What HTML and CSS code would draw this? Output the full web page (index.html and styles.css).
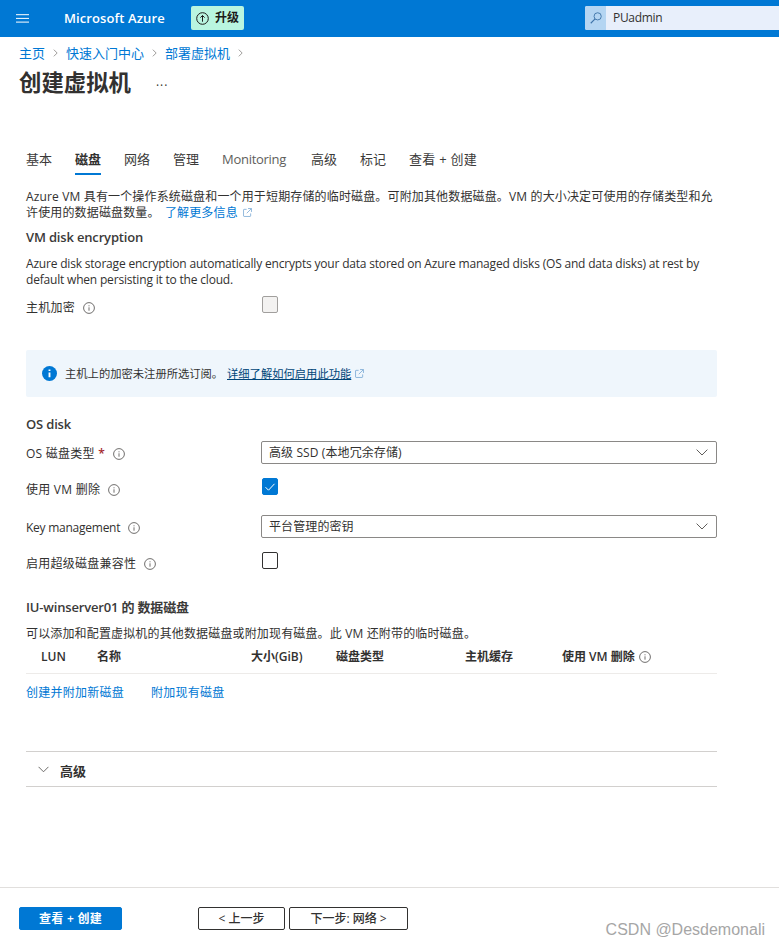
FILE: index.html
```html
<!DOCTYPE html>
<html lang="zh-CN">
<head>
<meta charset="utf-8">
<title>创建虚拟机</title>
<link rel="stylesheet" href="styles.css">
</head>
<body>
<svg class="defs" width="0" height="0" aria-hidden="true">
  <symbol id="i-info" viewBox="0 0 12 12"><circle cx="6" cy="6" r="5.4" fill="none" stroke="currentColor" stroke-width=".9"/><path d="M6 5.3v3.4M6 3.3v1" fill="none" stroke="currentColor" stroke-width=".9"/></symbol>
  <symbol id="i-ext" viewBox="0 0 10 10"><path d="M4 1.5H1.2a.6.6 0 0 0-.6.6v6.7c0 .3.3.6.6.6h6.7c.3 0 .6-.3.6-.6V6M5.6.6h3.8v3.8M9.2.8 4.2 5.8" fill="none" stroke="currentColor" stroke-width=".8"/></symbol>
  <symbol id="i-chev" viewBox="0 0 12 7"><path d="M.6.6 6 6 11.4.6" fill="none" stroke="currentColor" stroke-width="1"/></symbol>
</svg>

<header class="topbar">
  <svg class="burger" width="13" height="9" viewBox="0 0 13 9"><path d="M0 .7h13M0 4.4h13M0 8.1h13" stroke="#fff" stroke-width="1"/></svg>
  <span class="brand">Microsoft Azure</span>
  <span class="upgrade">
    <svg width="13" height="13" viewBox="0 0 13 13"><circle cx="6.5" cy="6.5" r="5.8" fill="none" stroke="#1b1a19" stroke-width="1"/><path d="M6.5 9.7V3.6M4.4 5.6l2.1-2.1 2.1 2.1" fill="none" stroke="#1b1a19" stroke-width="1"/></svg>
    升级
  </span>
  <div class="search">
    <span class="search-btn"><svg width="12" height="12" viewBox="0 0 13 13"><circle cx="8.3" cy="4.7" r="3.9" fill="none" stroke="#3f74a8" stroke-width="1"/><path d="M5.5 7.5 .8 12.2" stroke="#3f74a8" stroke-width="1.2"/></svg></span>
    <span class="search-text">PUadmin</span>
  </div>
</header>

<nav class="crumbs">
  <a>主页</a><svg class="crumb-sep" width="5" height="10" viewBox="0 0 6 10"><path d="M1 1l4 4-4 4" fill="none" stroke="#8a8886" stroke-width="1"/></svg>
  <a>快速入门中心</a><svg class="crumb-sep" width="5" height="10" viewBox="0 0 6 10"><path d="M1 1l4 4-4 4" fill="none" stroke="#8a8886" stroke-width="1"/></svg>
  <a>部署虚拟机</a><svg class="crumb-sep" width="5" height="10" viewBox="0 0 6 10"><path d="M1 1l4 4-4 4" fill="none" stroke="#8a8886" stroke-width="1"/></svg>
</nav>

<div class="title-row">
  <h1>创建虚拟机</h1>
  <span class="more">···</span>
</div>

<main class="content">
  <div class="tabs">
    <span class="tab">基本</span>
    <span class="tab active">磁盘</span>
    <span class="tab">网络</span>
    <span class="tab">管理</span>
    <span class="tab tab-en">Monitoring</span>
    <span class="tab">高级</span>
    <span class="tab">标记</span>
    <span class="tab tab-last">查看 + 创建</span>
  </div>

  <p class="text zh intro">Azure VM 具有一个操作系统磁盘和一个用于短期存储的临时磁盘。可附加其他数据磁盘。VM 的大小决定可使用的存储类型和允<br>许使用的数据磁盘数量。 <a class="link intro-link">了解更多信息<svg class="ext" width="9" height="9"><use href="#i-ext"/></svg></a></p>

  <h2 class="h-enc">VM disk encryption</h2>
  <p class="text desc">Azure disk storage encryption automatically encrypts your data stored on Azure managed disks (OS and data disks) at rest by<br>default when persisting it to the cloud.</p>

  <div class="row row-check row-host">
    <label class="lbl">主机加密<svg class="info" width="12" height="12"><use href="#i-info"/></svg></label>
    <span class="check disabled"></span>
  </div>

  <div class="notice">
    <svg width="15" height="15" viewBox="0 0 16 16"><circle cx="8" cy="8" r="8" fill="#0078d4"/><path d="M8 7v5M8 3.6v1.8" stroke="#fff" stroke-width="2"/></svg>
    <span class="notice-text">主机上的加密未注册所选订阅。</span>
    <a class="notice-link">详细了解如何启用此功能</a>
    <svg class="ext notice-ext" width="9" height="9"><use href="#i-ext"/></svg>
  </div>

  <h2 class="h-os">OS disk</h2>

  <div class="row row-type">
    <label class="lbl">OS 磁盘类型<span class="req"> *</span><svg class="info" width="12" height="12"><use href="#i-info"/></svg></label>
    <div class="select"><span>高级 SSD (本地冗余存储)</span><svg class="chev" width="12" height="7"><use href="#i-chev"/></svg></div>
  </div>
  <div class="row row-check row-del">
    <label class="lbl">使用 VM 删除<svg class="info" width="12" height="12"><use href="#i-info"/></svg></label>
    <span class="check on"><svg width="12" height="10" viewBox="0 0 12 10"><path d="M1.5 5.2 4.5 8.2 10.5 1.8" fill="none" stroke="#fff" stroke-width="1"/></svg></span>
  </div>
  <div class="row row-key">
    <label class="lbl lbl-en">Key management<svg class="info" width="12" height="12"><use href="#i-info"/></svg></label>
    <div class="select"><span>平台管理的密钥</span><svg class="chev" width="12" height="7"><use href="#i-chev"/></svg></div>
  </div>
  <div class="row row-check row-ultra">
    <label class="lbl">启用超级磁盘兼容性<svg class="info" width="12" height="12"><use href="#i-info"/></svg></label>
    <span class="check"></span>
  </div>

  <h2 class="h-data">IU-winserver01 的 数据磁盘</h2>
  <p class="text zh data-desc">可以添加和配置虚拟机的其他数据磁盘或附加现有磁盘。此 VM 还附带的临时磁盘。</p>

  <div class="thead">
    <span>LUN</span><span>名称</span><span>大小(GiB)</span><span>磁盘类型</span><span>主机缓存</span>
    <span class="th-last">使用 VM 删除<svg class="info" width="12" height="12"><use href="#i-info"/></svg></span>
  </div>
  <div class="actions">
    <a class="link">创建并附加新磁盘</a>
    <a class="link">附加现有磁盘</a>
  </div>

  <div class="accordion">
    <svg class="chev" width="11" height="7"><use href="#i-chev"/></svg>
    <span>高级</span>
  </div>
</main>

<footer class="footer">
  <button class="btn primary">查看 + 创建</button>
  <button class="btn prev">&lt; 上一步</button>
  <button class="btn next">下一步: 网络 &gt;</button>
</footer>
<span class="watermark">CSDN @Desdemonali</span>
</body>
</html>
```

FILE: styles.css
```css
* { box-sizing: border-box; }
html, body { margin: 0; padding: 0; height: 100%; }
body {
  position: relative;
  height: 945px;
  overflow: hidden;
  display: flex;
  flex-direction: column;
  background: #fff;
  color: #323130;
  font-family: "Open Sans", "Noto Sans CJK SC", sans-serif;
  font-size: 12px;
  line-height: 16px;
}
.defs { position: absolute; }

.topbar {
  flex: none;
  height: 37px;
  background: #0078d4;
  display: flex;
  align-items: center;
  color: #fff;
  padding: 0 0 1px 16px;
}
.burger { flex: none; }
.brand { margin-left: 35px; font-size: 13px; font-weight: 600; letter-spacing: .1px; width: 127px; white-space: nowrap; }
.upgrade {
  width: 53px;
  height: 24px;
  background: #b9f5e0;
  border-radius: 2px;
  color: #1b1a19;
  font-weight: 700;
  display: flex;
  align-items: center;
  gap: 6px;
  padding-left: 5px;
  white-space: nowrap;
}
.search {
  margin-left: 341px;
  flex: 1;
  height: 24px;
  background: #e8effb;
  border-radius: 2px 0 0 2px;
  display: flex;
  align-items: center;
}
.search-btn {
  width: 21px;
  height: 24px;
  background: #b4d5f2;
  border-radius: 2px 0 0 2px;
  display: flex;
  align-items: center;
  justify-content: center;
}
.search-text { margin-left: 7px; color: #323130; font-size: 12px; letter-spacing: -.3px; }

.crumbs {
  display: flex;
  align-items: center;
  height: 16px;
  margin: 8px 0 0 19px;
  font-size: 13px;
}
.crumbs a { color: #0078d4; }
.crumb-sep { margin: 0 8px; flex: none; }

.title-row { display: flex; align-items: center; margin: 4px 0 0 19px; height: 36px; }
h1 { margin: 0; font-size: 22.4px; font-weight: 700; line-height: 36px; color: #323130; }
.more { margin: 6px 0 0 25px; font-size: 12px; letter-spacing: 1px; color: #323130; }

.content { width: 717px; padding-left: 26px; flex: none; }

.tabs { display: flex; gap: 23px; margin-top: 48px; height: 29px; font-size: 13px; line-height: 20px; color: #3b3a39; }
.tab { height: 29px; }
.tab-en { width: 66px; letter-spacing: -.3px; color: #605e5c; white-space: nowrap; }
.tab-last { letter-spacing: .25px; }
.tab.active { font-weight: 600; color: #323130; border-bottom: 2px solid #0078d4; height: 26px; }

.text { margin: 0; color: #323130; white-space: nowrap; }
.zh { letter-spacing: .15px; }
.intro { margin-top: 11px; }
.link { color: #0078d4; letter-spacing: .25px; white-space: nowrap; }
.intro-link { margin-left: 2px; letter-spacing: .15px; }
.ext { margin-left: 5px; color: #6a9fd0; }

h2 { margin: 0; font-size: 13px; font-weight: 600; letter-spacing: -.17px; line-height: 18px; color: #3b3a39; }
.h-enc { margin-top: 7px; }
.desc { margin-top: 10px; letter-spacing: -.19px; }

.row { display: grid; grid-template-columns: 235px 456px; align-items: center; }
.lbl { display: flex; align-items: center; color: #323130; letter-spacing: .25px; white-space: nowrap; padding-top: 2px; }
.lbl-en { letter-spacing: -.25px; }
.row-check { align-items: start; height: 17px; }
.row-check .lbl { padding-top: 0; margin-top: 4px; }
.info { margin-left: 8px; color: #605e5c; flex: none; }
.req { color: #a4262c; white-space: pre; font-weight: 600; }

.check {
  width: 16px;
  height: 17px;
  border: 1px solid #323130;
  border-radius: 2px;
  display: flex;
  align-items: center;
  justify-content: center;
  margin-left: 1px;
}
.check.disabled { background: #f3f2f1; border-color: #a19f9d; }
.check.on { background: #0078d4; border-color: #0078d4; }

.row-host { margin-top: 8px; }
.notice {
  margin-top: 37px;
  width: 691px;
  height: 47px;
  background: #eff6fc;
  border-radius: 2px;
  display: flex;
  align-items: center;
  padding-left: 16px;
}
.notice-text { margin-left: 8px; width: 162px; white-space: nowrap; font-size: 11.3px; }
.notice-link { color: #004578; text-decoration: underline; font-size: 11.3px; white-space: nowrap; }
.notice-ext { margin-left: 4px; }

.h-os { margin-top: 18px; }
.row-type { margin-top: 8px; }
.select {
  height: 23px;
  border: 1px solid #8a8886;
  border-radius: 2px;
  display: flex;
  align-items: center;
  justify-content: space-between;
  padding: 0 8px 0 7px;
  color: #323130;
  letter-spacing: .1px;
}
.chev { color: #605e5c; flex: none; }
.row-del { margin-top: 14px; }
.row-key { margin-top: 20px; }
.row-ultra { margin-top: 14px; }

.h-data { margin-top: 29px; }
.data-desc { margin-top: 10px; }

.thead {
  display: grid;
  grid-template-columns: 56px 154px 85px 129px 97px 1fr;
  width: 691px;
  height: 32px;
  padding: 7px 0 0 15px;
  border-bottom: 1px solid #edebe9;
  font-weight: 600;
  white-space: nowrap;
}
.th-last { display: flex; align-items: center; height: 16px; }
.th-last .info { margin-left: 4px; }

.actions { display: flex; gap: 27px; margin-top: 11px; height: 16px; }

.accordion {
  width: 691px;
  height: 36px;
  margin-top: 50px;
  border-top: 1px solid #d2d0ce;
  border-bottom: 1px solid #d2d0ce;
  display: flex;
  align-items: center;
  padding-left: 12px;
  font-weight: 600;
  font-size: 13px;
}
.accordion span { margin: 4px 0 0 11px; }

.footer {
  margin-top: auto;
  height: 58px;
  border-top: 1px solid #e1dfdd;
  padding: 19px 0 0 19px;
  display: flex;
  align-items: flex-start;
}
.btn {
  height: 23px;
  border: 1px solid #323130;
  border-radius: 2px;
  background: #fff;
  color: #323130;
  font-family: inherit;
  font-size: 12px;
  font-weight: 500;
  padding: 0;
  line-height: 20px;
}
.primary { width: 103px; background: #0078d4; border-color: #0078d4; color: #fff; font-weight: 600; letter-spacing: .3px; }
.prev { width: 87px; margin-left: 76px; }
.next { width: 119px; margin-left: 4px; }

.watermark {
  position: absolute;
  right: 14px;
  bottom: 6px;
  font-size: 16px;
  line-height: 18px;
  color: #a6a6a6;
  font-family: "Liberation Sans", sans-serif;
}
```
